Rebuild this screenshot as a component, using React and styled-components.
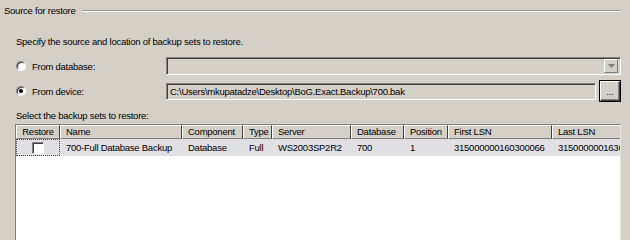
import React from "react";
import styled, { createGlobalStyle } from "styled-components";

const Global = createGlobalStyle`
  html, body { margin: 0; padding: 0; background: #d4d0c8; }
  body {
    font-family: "Liberation Sans", Arial, sans-serif;
    font-size: 9.5px;
    letter-spacing: -0.25px;
    color: #000;
  }
`;

const Page = styled.div`
  width: 630px;
  height: 240px;
  overflow: hidden;
  background: #d4d0c8;
  display: flex;
  flex-direction: column;
`;

const GroupTitle = styled.div`
  display: flex;
  align-items: center;
  gap: 6px;
  height: 13px;
  line-height: 13px;
  margin: 4px 9px 0 4px;
  white-space: nowrap;
`;

const Rule = styled.div`
  flex: 1;
  height: 0;
  border-top: 1px solid #9a978f;
  border-bottom: 1px solid #fff;
`;

const Body = styled.div`
  padding: 18px 9px 0 16px;
  display: flex;
  flex-direction: column;
`;

const Hint = styled.div`
  height: 13px;
  line-height: 13px;
`;

const SourceRow = styled.div`
  display: grid;
  grid-template-columns: 150px 1fr;
  align-items: center;
  margin-top: ${(p) => p.$top}px;
`;

const RadioLabel = styled.label`
  display: flex;
  align-items: center;
  gap: 6px;
`;

const RadioDot = styled.span`
  width: 10px;
  height: 10px;
  border-radius: 50%;
  box-sizing: border-box;
  background: #fff;
  border: 1px solid #808080;
  border-right-color: #fff;
  border-bottom-color: #fff;
  box-shadow: inset 1px 1px 0 #404040;
  display: flex;
  align-items: center;
  justify-content: center;
  &::after {
    content: "";
    width: 4px;
    height: 4px;
    border-radius: 50%;
    background: ${(p) => (p.$on ? "#000" : "transparent")};
  }
`;

const FieldLine = styled.div`
  display: flex;
  align-items: center;
  gap: 4px;
`;

const Sunken = styled.div`
  flex: 1;
  box-sizing: border-box;
  height: ${(p) => p.$h}px;
  background: #d4d0c8;
  border: 1px solid #808080;
  border-right-color: #fff;
  border-bottom-color: #fff;
  box-shadow: inset 1px 1px 0 #404040;
  display: flex;
  align-items: center;
  justify-content: space-between;
  padding: 0 2px 0 3px;
  white-space: nowrap;
  overflow: hidden;
`;

const DropButton = styled.span`
  width: 14px;
  height: 14px;
  box-sizing: border-box;
  background: #d4d0c8;
  border: 1px solid #fff;
  border-right-color: #808080;
  border-bottom-color: #808080;
  display: flex;
  align-items: center;
  justify-content: center;
  svg { display: block; }
`;

const PushButton = styled.button`
  width: 20px;
  height: 20px;
  box-sizing: border-box;
  padding: 0 0 3px;
  background: #d4d0c8;
  border: 1px solid #fff;
  border-right-color: #404040;
  border-bottom-color: #404040;
  box-shadow: inset -1px -1px 0 #808080, 0 0 0 1px #000;
  font: inherit;
  font-size: 9px;
  line-height: 1;
  color: #000;
  margin-right: 1px;
  display: flex;
  align-items: flex-end;
  justify-content: center;
`;

const GridLabel = styled.div`
  margin-top: 8px;
  height: 13px;
  line-height: 13px;
`;

const Grid = styled.div`
  margin: 2px 0 0 -1px;
  height: 120px;
  background: #fff;
  box-sizing: border-box;
  border-left: 1px solid #808080;
  border-top: 1px solid #808080;
  border-right: 1px solid #e8e6e0;
  overflow: hidden;
`;

const cols = "44px 122px 61px 29px 79px 53px 44px 104px 80px";

const HeaderRow = styled.div`
  display: grid;
  grid-template-columns: ${cols};
  height: 14px;
`;

const HeadCell = styled.div`
  box-sizing: border-box;
  background: #d4d0c8;
  border-top: 1px solid #fff;
  border-left: 1px solid #fff;
  border-right: 1px solid #404040;
  border-bottom: 1px solid #808080;
  padding-left: ${(p) => (p.$center ? 0 : 5)}px;
  text-align: ${(p) => (p.$center ? "center" : "left")};
  line-height: 12px;
  white-space: nowrap;
  overflow: hidden;
`;

const DataRow = styled.div`
  display: grid;
  grid-template-columns: ${cols};
  height: 17px;
  background: #e0dfe3;
`;

const Cell = styled.div`
  box-sizing: border-box;
  padding-left: ${(p) => (p.$center ? 0 : 6)}px;
  white-space: nowrap;
  overflow: hidden;
  display: flex;
  align-items: center;
  justify-content: ${(p) => (p.$center ? "center" : "flex-start")};
  border: ${(p) => (p.$focus ? "1px dotted #4a4a4a" : "none")};
`;

const CheckBox = styled.span`
  width: 12px;
  height: 12px;
  box-sizing: border-box;
  background: #fff;
  border: 1px solid #808080;
  border-right-color: #fff;
  border-bottom-color: #fff;
  box-shadow: inset 1px 1px 0 #404040;
`;

const headers = ["Name", "Component", "Type", "Server", "Database", "Position", "First LSN", "Last LSN"];
const row = ["700-Full Database Backup", "Database", "Full", "WS2003SP2R2", "700", "1", "315000000160300066", "315000000163000001"];

export default function App() {
  return (
    <Page>
      <Global />
      <GroupTitle>
        <span>Source for restore</span>
        <Rule />
      </GroupTitle>
      <Body>
        <Hint>Specify the source and location of backup sets to restore.</Hint>
        <SourceRow $top={9}>
          <RadioLabel>
            <RadioDot />
            From database:
          </RadioLabel>
          <FieldLine>
            <Sunken $h={18}>
              <span />
              <DropButton>
                <svg width="7" height="4" viewBox="0 0 7 4">
                  <path d="M0 0h7L3.5 4z" fill="#808080" />
                </svg>
              </DropButton>
            </Sunken>
          </FieldLine>
        </SourceRow>
        <SourceRow $top={6}>
          <RadioLabel>
            <RadioDot $on />
            From device:
          </RadioLabel>
          <FieldLine>
            <Sunken $h={17}>C:\Users\mkupatadze\Desktop\BoG.Exact.Backup\700.bak</Sunken>
            <PushButton>...</PushButton>
          </FieldLine>
        </SourceRow>
        <GridLabel>Select the backup sets to restore:</GridLabel>
        <Grid>
          <HeaderRow>
            <HeadCell $center>Restore</HeadCell>
            {headers.map((h) => (
              <HeadCell key={h}>{h}</HeadCell>
            ))}
          </HeaderRow>
          <DataRow>
            <Cell $center $focus>
              <CheckBox />
            </Cell>
            {row.map((v, i) => (
              <Cell key={i}>{v}</Cell>
            ))}
          </DataRow>
        </Grid>
      </Body>
    </Page>
  );
}
